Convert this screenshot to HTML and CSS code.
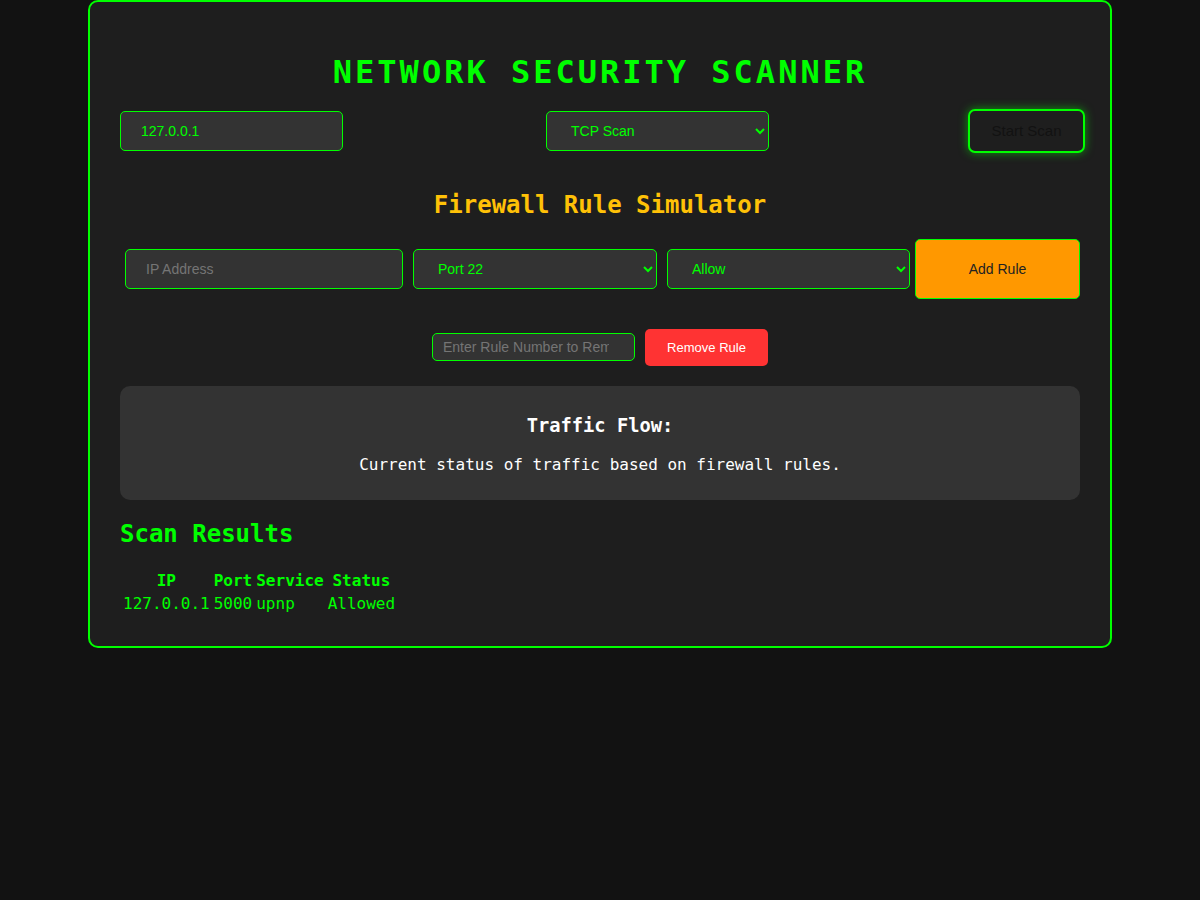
FILE: index.html
```html
<!DOCTYPE html>
<html lang="en">
<head>
<meta charset="UTF-8">
<title>Network Security Scanner</title>
<link rel="stylesheet" href="styles.css">
</head>
<body>
<div class="container">
  <h1 class="title">NETWORK SECURITY SCANNER</h1>
  <div class="scan-row">
    <input class="field target" type="text" value="127.0.0.1">
    <select class="field scan-type">
      <option>TCP Scan</option>
      <option>UDP Scan</option>
    </select>
    <button class="start-btn">Start Scan</button>
  </div>

  <h2 class="fw-title">Firewall Rule Simulator</h2>
  <div class="rule-row">
    <input class="field rule-ip" type="text" placeholder="IP Address">
    <select class="field rule-port">
      <option>Port 22</option>
      <option>Port 80</option>
      <option>Port 443</option>
    </select>
    <select class="field rule-action">
      <option>Allow</option>
      <option>Block</option>
    </select>
    <button class="add-btn">Add Rule</button>
  </div>

  <div class="remove-row">
    <input class="remove-input" type="number" placeholder="Enter Rule Number to Remove">
    <button class="remove-btn">Remove Rule</button>
  </div>

  <div class="traffic">
    <h3>Traffic Flow:</h3>
    <p>Current status of traffic based on firewall rules.</p>
  </div>

  <h2 class="results-title">Scan Results</h2>
  <table class="results">
    <thead>
      <tr><th>IP</th><th>Port</th><th>Service</th><th>Status</th></tr>
    </thead>
    <tbody>
      <tr><td>127.0.0.1</td><td>5000</td><td>upnp</td><td>Allowed</td></tr>
    </tbody>
  </table>
</div>
</body>
</html>
```

FILE: styles.css
```css
html, body {
  margin: 0;
  padding: 0;
}

body {
  background: #121212;
  color: #00ff00;
  font-family: "DejaVu Sans Mono", monospace;
}

.container {
  width: 960px;
  margin: 0 auto;
  padding: 30px;
  background: #1e1e1e;
  border: 2px solid #00ff00;
  border-radius: 10px;
}

.title {
  font-size: 32px;
  text-align: center;
  letter-spacing: 3px;
  margin: 21.44px 0 17.5px;
  color: #00ff00;
}

.field {
  box-sizing: border-box;
  height: 40px;
  padding: 0 20px;
  background: #333333;
  color: #00ff00;
  border: 1px solid #00ff00;
  border-radius: 5px;
  font-family: "Liberation Sans", Arial, sans-serif;
  font-size: 14px;
  outline: none;
}

.scan-row {
  display: flex;
  align-items: center;
}

.target { width: 223px; }
.scan-type { width: 223px; margin-left: 203px; }

.start-btn {
  box-sizing: border-box;
  width: 117px;
  height: 44px;
  margin-left: auto;
  margin-right: -5px;
  background: #1e1e1e;
  color: #121212;
  border: 2px solid #00ff00;
  border-radius: 7px;
  box-shadow: 0 0 10px rgba(0, 255, 0, 0.55);
  font-family: "Liberation Sans", Arial, sans-serif;
  font-size: 15px;
}

.fw-title {
  font-size: 24px;
  text-align: center;
  color: #ffc107;
  margin: 38px 0 20px;
}

.rule-row {
  display: flex;
  align-items: center;
  margin-bottom: 30px;
}

.rule-row .field { margin: 0 5px; }
.rule-ip { width: 278px; }
.rule-port { width: 244px; }
.rule-action { width: 243px; }

.add-btn {
  box-sizing: border-box;
  width: 165px;
  height: 60px;
  margin-left: 0;
  background: #ff9800;
  color: #222;
  border: 1px solid #00ff00;
  border-radius: 5px;
  font-family: "Liberation Sans", Arial, sans-serif;
  font-size: 14px;
}

.remove-row {
  display: flex;
  justify-content: center;
  align-items: center;
  gap: 10px;
  margin-bottom: 20px;
}

.remove-input {
  box-sizing: border-box;
  width: 203px;
  height: 28px;
  padding: 0 10px;
  background: #333333;
  color: #00ff00;
  border: 1px solid #00ff00;
  border-radius: 5px;
  font-family: "Liberation Sans", Arial, sans-serif;
  font-size: 14px;
  outline: none;
}

.remove-btn {
  box-sizing: border-box;
  width: 123px;
  height: 37px;
  background: #ff3333;
  color: #ffffff;
  border: none;
  border-radius: 5px;
  font-family: "Liberation Sans", Arial, sans-serif;
  font-size: 13px;
}

.traffic {
  background: #333333;
  border-radius: 10px;
  padding: 10px 20px;
  text-align: center;
  color: #ffffff;
}

.traffic h3 {
  font-size: 18.72px;
  margin: 18.72px 0 19.5px;
}

.traffic p {
  font-size: 16px;
  margin: 16px 0;
}

.results-title {
  font-size: 24px;
  margin: 19.92px 0;
  color: #00ff00;
}

.results {
  font-size: 16px;
  color: #00ff00;
}

.results th,
.results td {
  padding: 1px;
}
```
